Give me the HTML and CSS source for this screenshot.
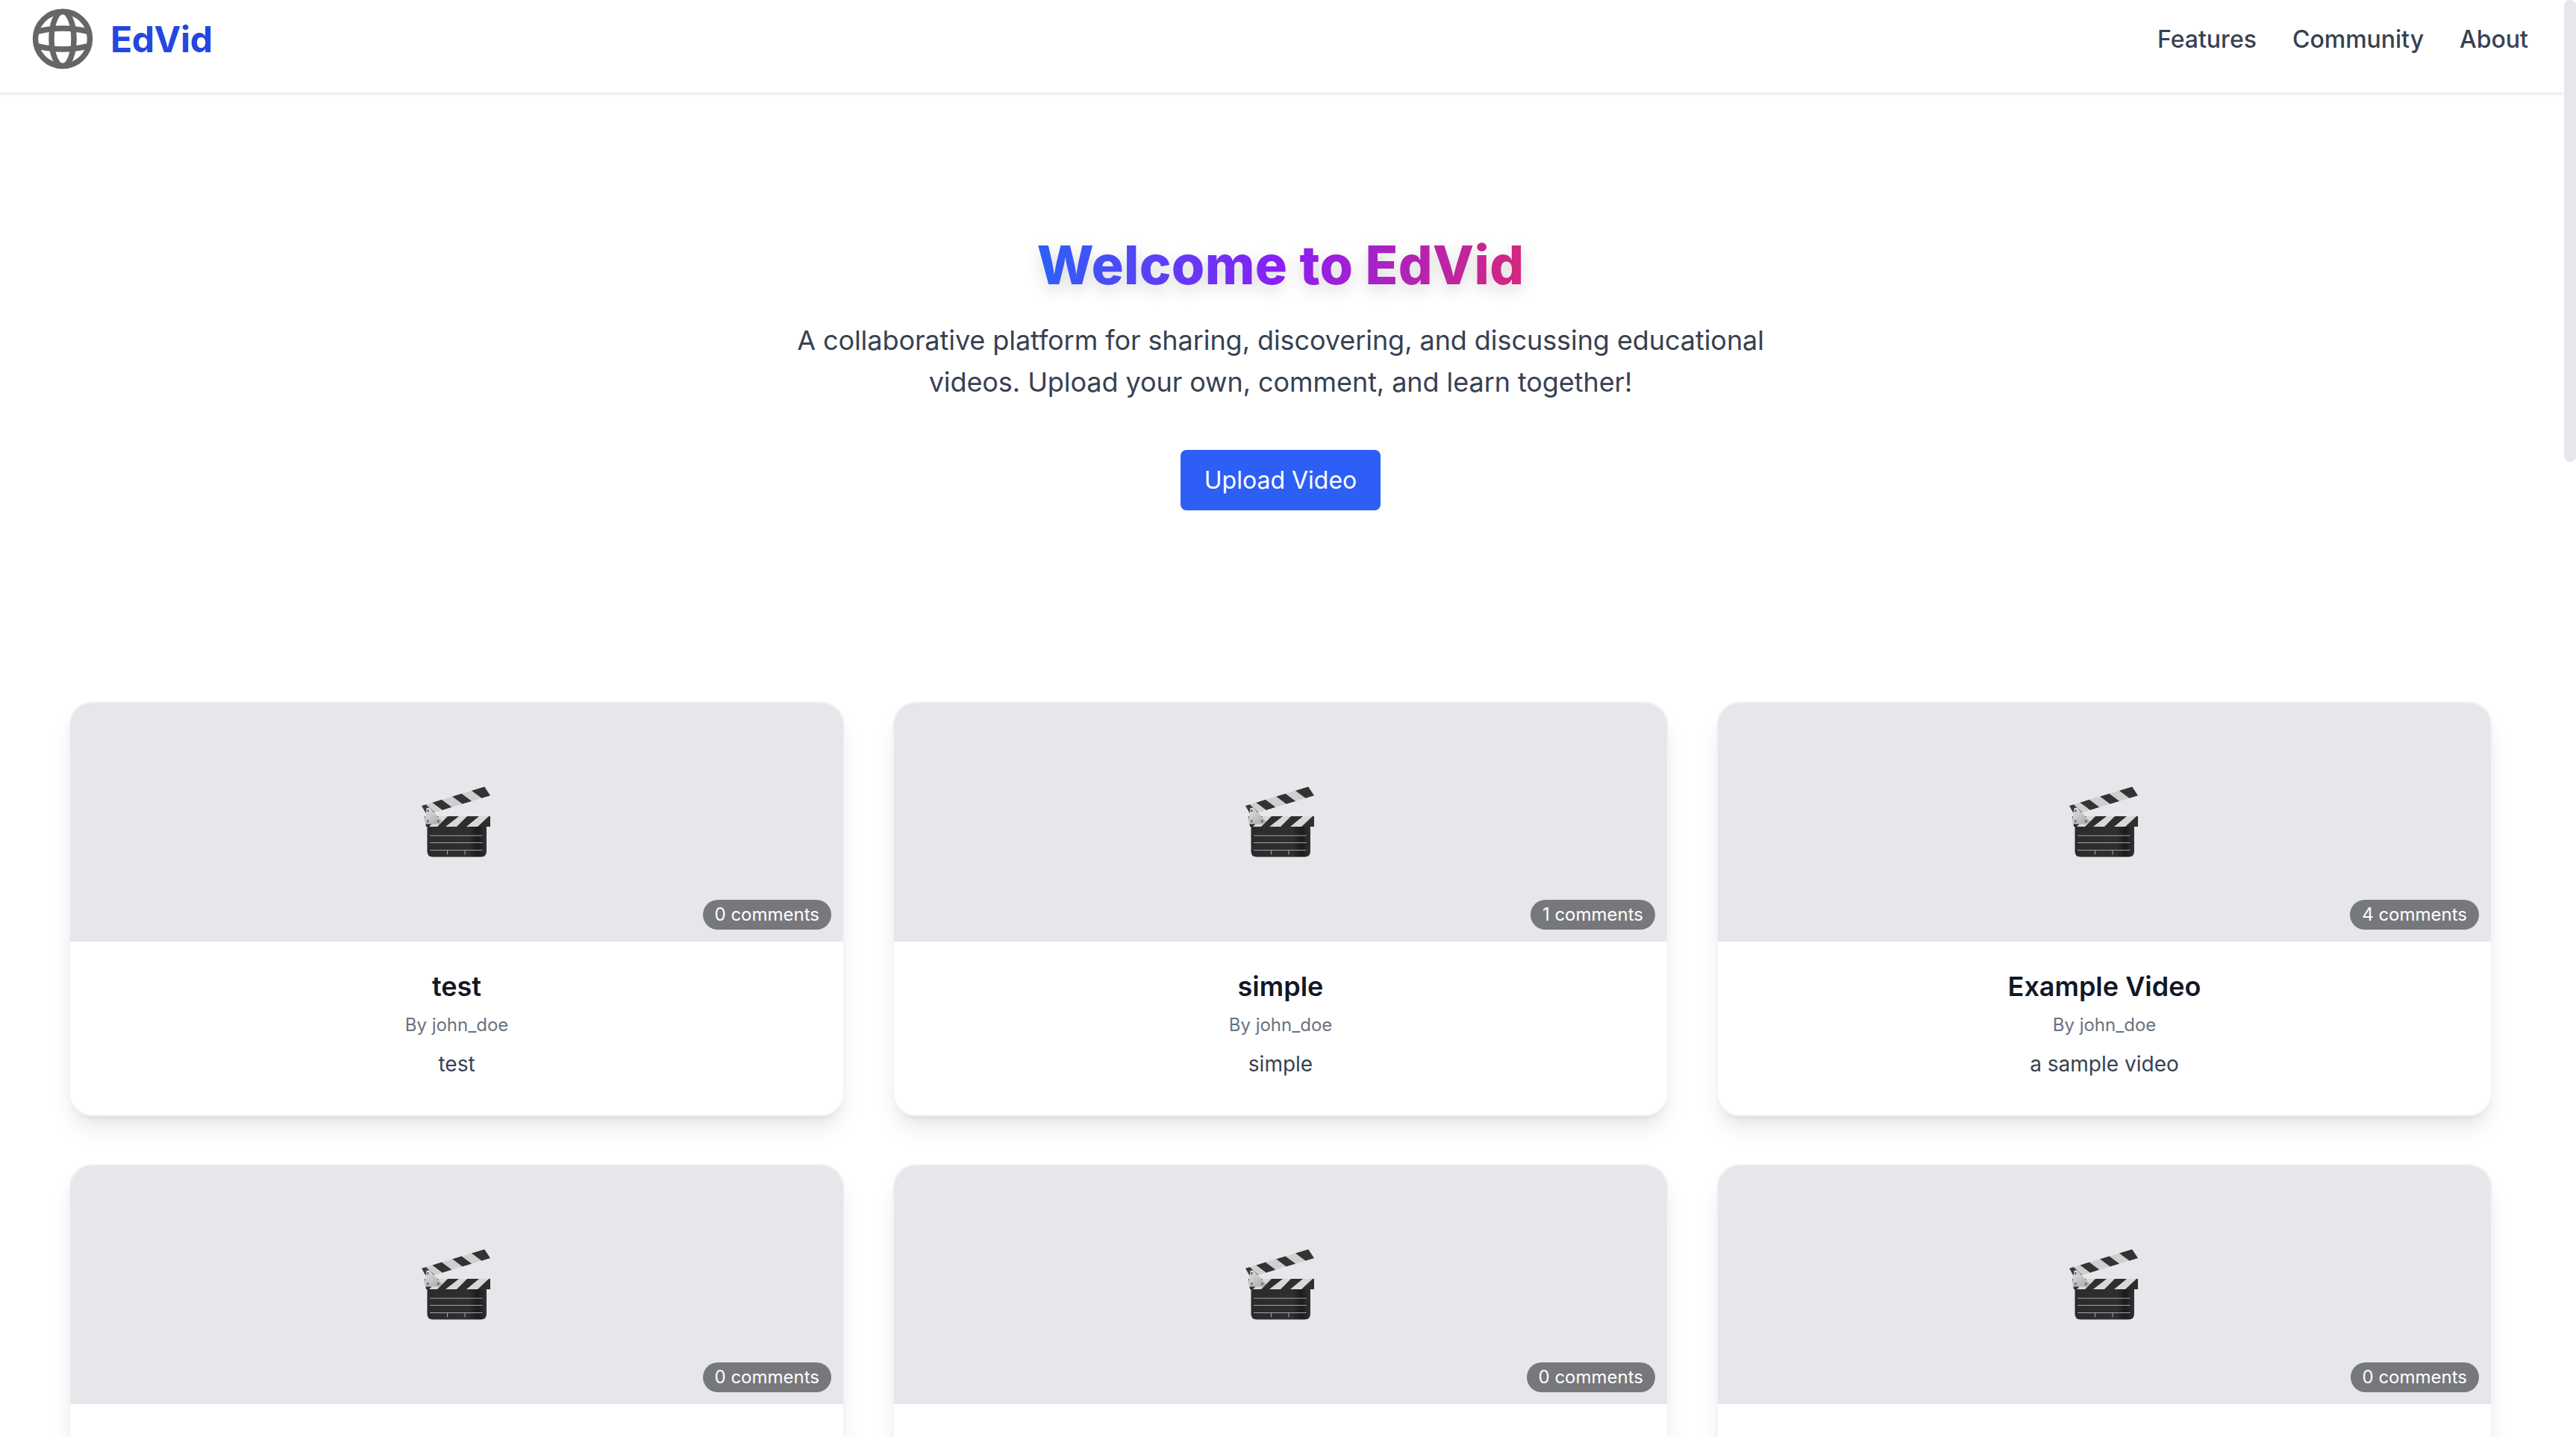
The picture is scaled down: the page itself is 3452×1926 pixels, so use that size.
FILE: index.html
```html
<!DOCTYPE html>
<html lang="en">
<head>
  <meta charset="UTF-8">
  <meta name="viewport" content="width=device-width, initial-scale=1.0">
  <title>EdVid</title>
  <link rel="stylesheet" href="styles.css">
</head>
<body>
  <svg class="sprites" width="0" height="0">
    <defs>
      <linearGradient id="slate" x1="0" x2="1" y1="0" y2="0">
        <stop offset="0" stop-color="#2b2b2b"/>
        <stop offset="0.7" stop-color="#2f2f2f"/>
        <stop offset="0.85" stop-color="#1b1b1b"/>
        <stop offset="1" stop-color="#333333"/>
      </linearGradient>
      <linearGradient id="plate" x1="0" x2="1" y1="0" y2="1">
        <stop offset="0" stop-color="#e2e2e2"/>
        <stop offset="1" stop-color="#a6a6a6"/>
      </linearGradient>
      <symbol id="clapper" viewBox="0 0 115 110">
        <!-- top flap -->
        <g transform="translate(10 35) rotate(-16.9)">
          <polygon points="0,0 88,0 92,13.5 4,13.5" fill="#cfcfcf"/>
          <polygon points="0,0 6,0 14,13.5 3,13.5" fill="#3a3a3a"/>
          <polygon points="15,0 28,0 38,13.5 25,13.5" fill="#333333"/>
          <polygon points="43,0 56,0 66,13.5 53,13.5" fill="#333333"/>
          <polygon points="70,0 88,0 92,13.5 80,13.5" fill="#333333"/>
        </g>
        <!-- lower bar -->
        <polygon points="14,49 102,49 102,63 16,63" fill="#2e2e2e"/>
        <polygon points="33,49 45,49 31,63 20,63" fill="#d8d8d8"/>
        <polygon points="60,49 71,49 57,63 42,63" fill="#d8d8d8"/>
        <polygon points="87,49 100,49 85,63 70,63" fill="#d8d8d8"/>
        <!-- slate -->
        <path d="M17.5 63H97V96Q97 103.500 89.500 103.500H25Q17.500 103.500 17.500 96Z" fill="url(#slate)"/>
        <g stroke="#a3a3a3" stroke-width="1.100" fill="none">
          <path d="M21 75H91.500"/>
          <path d="M21 84.500H91.500"/>
          <path d="M21 94.500H91.500"/>
          <path d="M44.500 94.500V100.500"/>
          <path d="M68 94.500V100.500"/>
        </g>
        <!-- hinge -->
        <polygon points="16.500,38 20.500,37.500 37.500,56 33.500,59.500 16,59.500 14,56.500" fill="url(#plate)"/>
        <g fill="#6e6e6e">
          <circle cx="18.300" cy="41.700" r="1.600"/>
          <circle cx="18.300" cy="55.700" r="1.600"/>
          <circle cx="32.300" cy="55.700" r="1.600"/>
        </g>
      </symbol>
    </defs>
  </svg>

  <div class="page">
    <header class="topbar">
      <a class="brand" href="#">
        <svg class="globe" viewBox="0 0 96 96">
          <circle cx="48" cy="48" r="36.500"/>
          <ellipse cx="48" cy="48" rx="15" ry="36.500"/>
          <path d="M15 38Q48 30 81 38"/>
          <path d="M15 58Q48 66 81 58"/>
        </svg>
        <span class="brand-name">EdVid</span>
      </a>
      <nav class="nav">
        <a href="#">Features</a>
        <a href="#">Community</a>
        <a href="#">About</a>
      </nav>
    </header>

    <main class="main">
      <section class="hero">
        <h1 class="hero-title">Welcome to EdVid</h1>
        <p class="hero-text">A collaborative platform for sharing, discovering, and discussing educational videos. Upload your own, comment, and learn together!</p>
        <a class="btn" href="#">Upload Video</a>
      </section>

      <section class="video-grid">
        <article class="card">
          <div class="thumb">
            <svg class="clapper"><use href="#clapper"/></svg>
            <span class="badge">0 comments</span>
          </div>
          <div class="card-body">
            <h3 class="card-title">test</h3>
            <p class="card-author">By john_doe</p>
            <p class="card-desc">test</p>
          </div>
        </article>
        <article class="card">
          <div class="thumb">
            <svg class="clapper"><use href="#clapper"/></svg>
            <span class="badge">1 comments</span>
          </div>
          <div class="card-body">
            <h3 class="card-title">simple</h3>
            <p class="card-author">By john_doe</p>
            <p class="card-desc">simple</p>
          </div>
        </article>
        <article class="card">
          <div class="thumb">
            <svg class="clapper"><use href="#clapper"/></svg>
            <span class="badge">4 comments</span>
          </div>
          <div class="card-body">
            <h3 class="card-title">Example Video</h3>
            <p class="card-author">By john_doe</p>
            <p class="card-desc">a sample video</p>
          </div>
        </article>
        <article class="card">
          <div class="thumb">
            <svg class="clapper"><use href="#clapper"/></svg>
            <span class="badge">0 comments</span>
          </div>
          <div class="card-body"></div>
        </article>
        <article class="card">
          <div class="thumb">
            <svg class="clapper"><use href="#clapper"/></svg>
            <span class="badge">0 comments</span>
          </div>
          <div class="card-body"></div>
        </article>
        <article class="card">
          <div class="thumb">
            <svg class="clapper"><use href="#clapper"/></svg>
            <span class="badge">0 comments</span>
          </div>
          <div class="card-body"></div>
        </article>
      </section>
    </main>
  </div>

  <div class="scrollbar"><div class="scrollbar-thumb"></div></div>
</body>
</html>
```

FILE: styles.css
```css
* {
  box-sizing: border-box;
}
html, body {
  margin: 0;
  height: 100%;
  overflow: hidden;
}
body {
  display: flex;
  font-family: Inter, "Noto Sans", sans-serif;
  background-color: #fff;
  color: #374151;
}
a {
  color: inherit;
  text-decoration: none;
}
.sprites {
  display: block;
  flex: none;
}
.page {
  flex: 1;
  min-width: 0;
  height: 100vh;
  overflow: hidden;
}
.scrollbar {
  flex: none;
  width: 16px;
}
.scrollbar-thumb {
  height: 619px;
  background-color: #e5e7eb;
  border-radius: 8px;
}

/* header */
.topbar {
  display: flex;
  justify-content: space-between;
  align-items: center;
  padding: 4px 48px 24px 36px;
  background-color: #fff;
  box-shadow: 0 2px 4px rgba(0, 0, 0, 0.12);
}
.brand {
  display: flex;
  align-items: center;
  gap: 16px;
}
.globe {
  width: 96px;
  height: 96px;
  fill: none;
  stroke: #666;
  stroke-width: 7.5;
}
.brand-name {
  font-size: 48px;
  font-weight: 700;
  letter-spacing: -0.4px;
  color: #2347e0;
}
.nav {
  display: flex;
  gap: 48px;
  font-size: 32px;
  font-weight: 500;
}

/* hero */
.main {
  padding: 0 96px 0 92px;
}
.hero {
  display: flex;
  flex-direction: column;
  align-items: center;
  padding: 191px 0 256px;
  text-align: center;
}
.hero-title {
  margin: 0;
  font-size: 72px;
  line-height: 80px;
  font-weight: 800;
  letter-spacing: 0.3px;
  background-image: linear-gradient(100deg, #2b62f8, #8a1ff5 50%, #d6277a);
  -webkit-background-clip: text;
  background-clip: text;
  color: transparent;
  filter: drop-shadow(0 8px 10px rgba(0, 0, 0, 0.14));
}
.hero-text {
  max-width: 1344px;
  margin: 33px 0 0;
  font-size: 36px;
  line-height: 56px;
  letter-spacing: -0.07px;
}
.btn {
  margin-top: 63px;
  padding: 16px 32px;
  font-size: 32px;
  line-height: 49px;
  color: #fff;
  background-color: #2d5ef5;
  border-radius: 8px;
}

/* cards */
.video-grid {
  display: grid;
  grid-template-columns: repeat(3, 1fr);
  gap: 64px;
}
.card {
  background-color: #fff;
  border: 2px solid #f3f4f6;
  border-radius: 32px;
  box-shadow: 0 20px 30px -6px rgba(0, 0, 0, 0.1), 0 8px 12px -8px rgba(0, 0, 0, 0.1);
  overflow: hidden;
}
.thumb {
  position: relative;
  display: flex;
  justify-content: center;
  align-items: center;
  height: 320px;
  padding-bottom: 4px;
  background-color: #e5e7eb;
}
.clapper {
  width: 115px;
  height: 110px;
}
.badge {
  position: absolute;
  right: 16px;
  bottom: 16px;
  padding: 4px 16px;
  font-size: 24px;
  line-height: 32px;
  color: #fff;
  background-color: rgba(0, 0, 0, 0.48);
  border-radius: 20px;
}
.card-body {
  padding: 32px 32px 48px;
  text-align: center;
}
.card-title {
  margin: 0;
  font-size: 36px;
  line-height: 56px;
  font-weight: 600;
  color: #111827;
}
.card-author {
  margin: 8px 0 0;
  font-size: 24px;
  line-height: 32px;
  color: #6b7280;
}
.card-desc {
  margin: 16px 0 0;
  font-size: 28px;
  line-height: 40px;
}
```
